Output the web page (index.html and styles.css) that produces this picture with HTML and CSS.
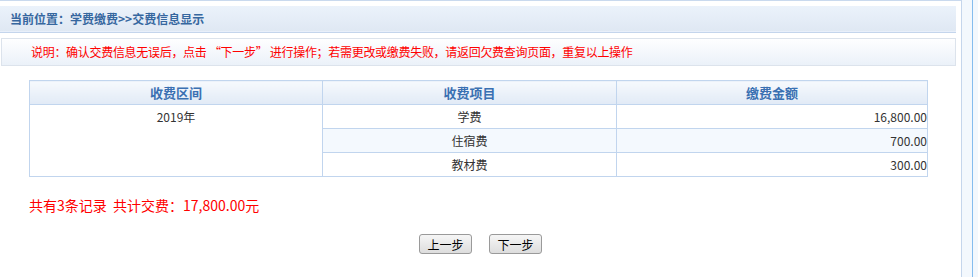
FILE: index.html
```html
<!DOCTYPE html>
<html lang="zh-CN">
<head>
    <meta charset="UTF-8">
    <title>交费信息显示</title>
    <link rel="stylesheet" href="styles.css">
</head>
<body>
    <div class="page">
        <div class="main">
            <div class="location">当前位置：学费缴费&gt;&gt;交费信息显示</div>
            <div class="note">说明：确认交费信息无误后，点击 “下一步” 进行操作；若需更改或缴费失败，请返回欠费查询页面，重复以上操作</div>

            <table class="fee-table">
                <colgroup>
                    <col class="col-term">
                    <col class="col-item">
                    <col class="col-money">
                </colgroup>
                <thead>
                    <tr>
                        <th>收费区间</th>
                        <th>收费项目</th>
                        <th>缴费金额</th>
                    </tr>
                </thead>
                <tbody>
                    <tr>
                        <td rowspan="3" class="term">2019年</td>
                        <td>学费</td>
                        <td class="money">16,800.00</td>
                    </tr>
                    <tr class="alt">
                        <td>住宿费</td>
                        <td class="money">700.00</td>
                    </tr>
                    <tr>
                        <td>教材费</td>
                        <td class="money">300.00</td>
                    </tr>
                </tbody>
            </table>

            <div class="summary">共有3条记录&nbsp;&nbsp;共计交费：17,800.00元</div>

            <div class="actions">
                <button class="btn">上一步</button>
                <button class="btn">下一步</button>
            </div>
        </div>
        <div class="side"></div>
    </div>
</body>
</html>
```

FILE: styles.css
```css
body {
    margin: 0;
    padding: 0;
    font-family: "Noto Sans CJK SC", "Liberation Sans", sans-serif;
    font-size: 12px;
    color: #333;
    background: #fff;
}
.page {
    display: flex;
    height: 277px;
    overflow: hidden;
}
.main {
    width: 961px;
    border-top: 1px solid #c9d9ee;
    border-right: 1px solid #c5d6ec;
    box-sizing: content-box;
}
.side {
    flex: 1;
    background: #f3f8fd;
    display: flex;
}
.side::before {
    content: "";
    width: 1px;
    margin-left: 10px;
    background: #85bdee;
}
.location {
    margin: 5px 5px 0 0;
    height: 25px;
    line-height: 25px;
    padding-left: 10px;
    font-weight: bold;
    color: #36679f;
    background: linear-gradient(#ebf2fb, #dfe8f3);
    border-bottom: 1px solid #e8effa;
    box-shadow: 0 1px 0 #c4d5ec;
}
.note {
    margin: 6px 5px 0 1px;
    height: 26px;
    line-height: 26px;
    padding-left: 29px;
    color: #f00;
    letter-spacing: -0.3px;
    border: 1px solid #dce3ec;
    background: linear-gradient(#fefeff, #ebf1f9);
}
.fee-table {
    width: 898px;
    margin: 14px 0 0 29px;
    border-collapse: collapse;
    table-layout: fixed;
}
.col-term { width: 293px; }
.col-item { width: 294px; }
.col-money { width: 311px; }
.fee-table th,
.fee-table td {
    border: 1px solid #c1d5ee;
    height: 23px;
    padding: 0;
    text-align: center;
}
.fee-table th {
    font-size: 13px;
    color: #3a70b2;
    background: linear-gradient(#f6f9fd, #e1eaf6);
}
.fee-table td.term {
    vertical-align: top;
    line-height: 23px;
    background: #fff;
}
.fee-table td.money {
    text-align: right;
}
.fee-table tr.alt td {
    background: #f4f9fe;
}
.summary {
    margin: 18px 0 0 29px;
    line-height: 20px;
    font-size: 14px;
    color: #f00;
}
.actions {
    margin-top: 19px;
    display: flex;
    justify-content: center;
    gap: 17px;
}
.btn {
    width: 53px;
    height: 20px;
    padding: 0;
    font-family: inherit;
    font-size: 12px;
    color: #000;
    border: 1px solid #9a9a9a;
    border-radius: 3px;
    background: linear-gradient(#f6f6f6, #dddddd);
    cursor: pointer;
}
```
